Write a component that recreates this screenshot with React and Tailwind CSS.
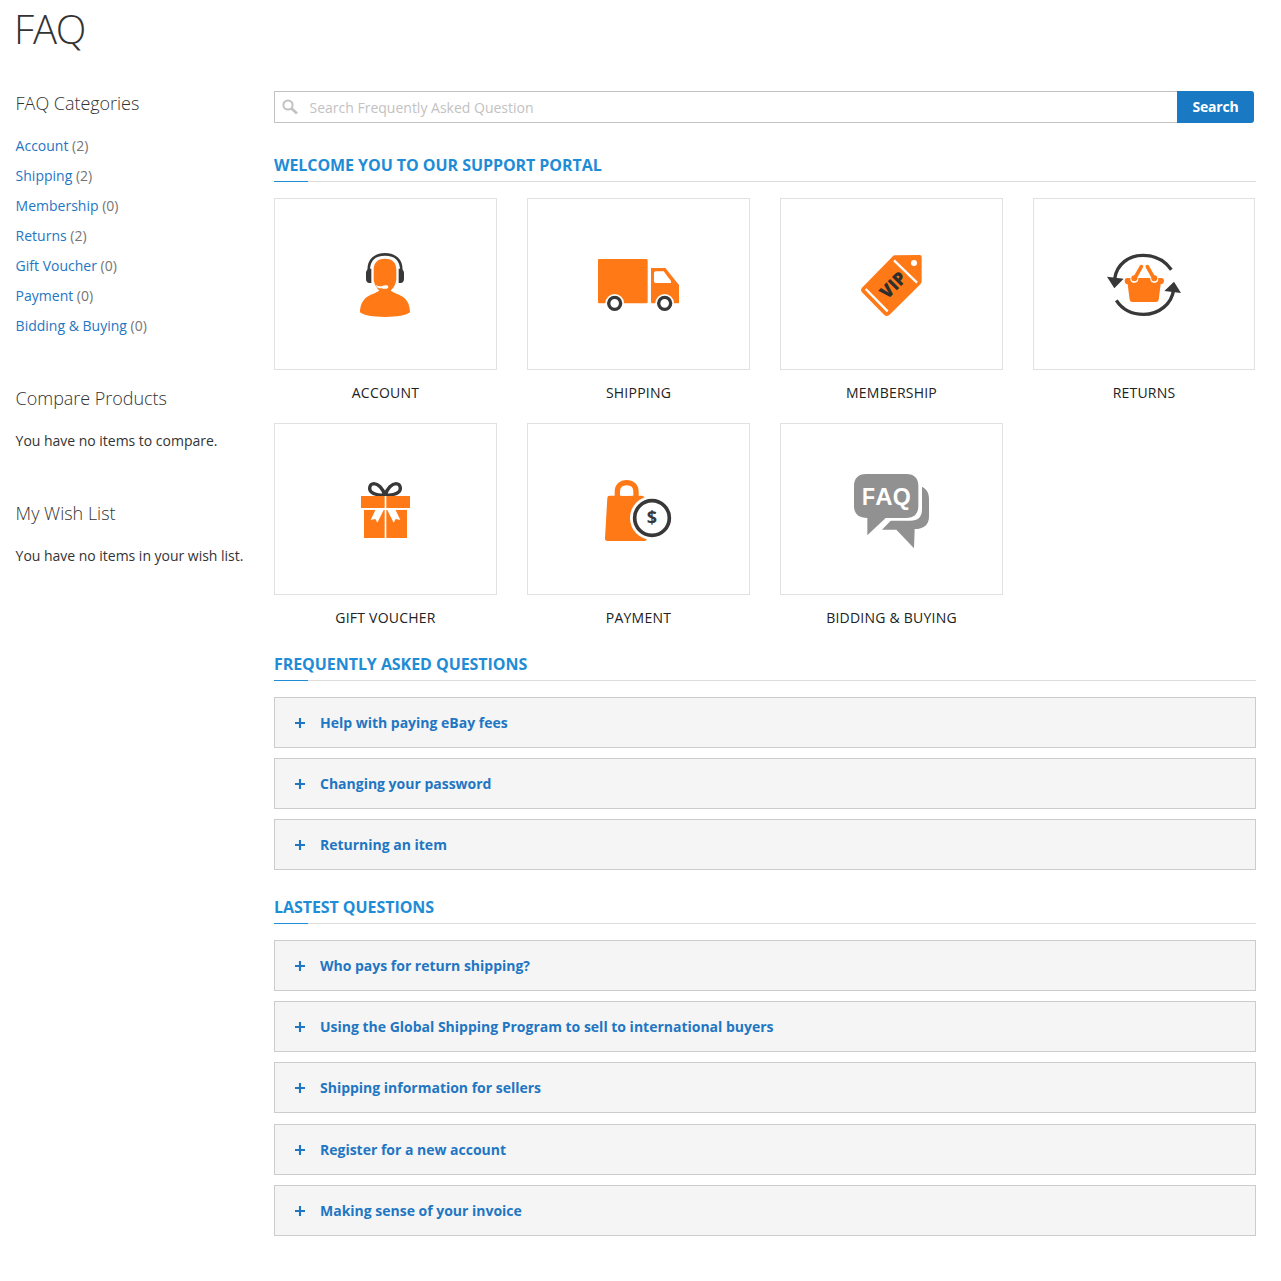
import React from "react";

const ORANGE = "#ff7917";
const DARK = "#383838";

const AccountIcon = () => (
  <g transform="translate(70 41) scale(.33333)">
    <path d="M71 91C71 59 91 43 120 43s49 16 49 48" fill="none" stroke={DARK} strokeWidth="8" />
    <path d="M79 86v43h-5c-8 0-11-6-11-13v-16c0-8 4-14 16-14zM161 86v43h5c8 0 11-6 11-13v-16c0-8-4-14-16-14z" fill={DARK} />
    <path d="M120 56c24 0 34 14 34 34v25c0 16-8 29-17 37 8 6 22 9 36 18 15 10 22 27 22 47-11 9-38 14-75 14s-64-5-75-14c0-20 7-37 22-47 14-9 28-12 36-18-9-8-17-21-17-37V90c0-20 10-34 34-34z" fill={ORANGE} />
    <path d="M92 135c6 3 13 5 20 3 6-3 17-3 18 2 1 7-13 8-20 5-9 1-15-3-18-10z" fill="#fff" />
    <path d="M84 129l13 16-8 2z" fill="#fff" />
  </g>
);

const ShippingIcon = () => (
  <g transform="translate(62 46) scale(.33333)">
    <path d="M27 42h142q4 0 4 4v125q0 4-4 4H27q-3 0-3-4V46q0-4 3-4zM183 69h43l41 51v55h-80q-4 0-4-4z" fill={ORANGE} />
    <path d="M197 79h24l22 29v6h-46q-5 0-5-5V84q0-5 5-5z" fill="#fff" />
    <circle cx="74" cy="175" r="28" fill="#fff" />
    <circle cx="224" cy="175" r="28" fill="#fff" />
    <circle cx="74" cy="175" r="18" fill="#fff" stroke={DARK} strokeWidth="10" />
    <circle cx="224" cy="175" r="18" fill="#fff" stroke={DARK} strokeWidth="10" />
  </g>
);

const MembershipIcon = () => (
  <g transform="translate(69 46) scale(.33333)">
    <path d="M135 31l74-1q6 0 6 6v73q0 5-4 9l-93 92q-8 6-15 0l-67-68q-6-7 0-14l91-93q4-4 8-4z" fill={ORANGE} />
    <path d="M132 46l69 67M47 132l66 67" stroke="#fff" strokeWidth="7" />
    <circle cx="192" cy="54" r="9" fill="#fff" />
    <text transform="translate(112 164) rotate(-45)" fill="#2e2e2e" fontFamily="Open Sans, sans-serif" fontSize="54" fontWeight="800" textLength="86" lengthAdjust="spacingAndGlyphs">VIP</text>
  </g>
);

const ReturnsIcon = () => (
  <g transform="translate(64 46) scale(.33333)" fill="none">
    <path d="M50 101C56 58 92 31 135 31c35 0 64 14 85 43" stroke={DARK} strokeWidth="10" />
    <path d="M55 166c17 26 45 42 82 42 46 0 84-31 90-74" stroke={DARK} strokeWidth="10" />
    <path d="M27 95l50 6-28 29zM228 110l21 34-50-6z" fill={DARK} />
    <path d="M87 99h103q8 0 8 9t-10 10l-6 46q-1 7-8 7h-71q-7 0-8-7l-6-46q-9-1-9-10t7-9z" fill={ORANGE} />
    <path d="M130 66l-22 37M148 66l22 37" stroke="#fff" strokeWidth="18" strokeLinecap="round" />
    <circle cx="109" cy="101" r="12" fill="#fff" />
    <circle cx="169" cy="101" r="12" fill="#fff" />
    <path d="M130 65l-21 37M148 65l21 37" stroke={ORANGE} strokeWidth="11" strokeLinecap="round" />
    <circle cx="109" cy="100" r="9" fill={ORANGE} />
    <circle cx="169" cy="100" r="9" fill={ORANGE} />
  </g>
);

const GiftIcon = () => (
  <g transform="translate(75 48) scale(.33333)">
    <path d="M105 70C98 48 84 35 72 35 57 36 56 53 64 60s19 10 41 10zM105 70c7-22 21-35 33-35 15 1 16 18 8 25s-19 10-41 10z" fill="none" stroke={DARK} strokeWidth="10" />
    <path d="M33 72h147v36H33zM42 113h129v85H42z" fill={ORANGE} />
    <path d="M104 72h5v126h-5zM42 108h129v5H42zM78 110h25l-21 42-6-11-14 3zM110 110h25l16 34-14-3-6 11z" fill="#fff" />
  </g>
);

const PaymentIcon = () => (
  <g transform="translate(67 46) scale(.33333)">
    <path d="M67 86V65c0-18 12-27 28-27s28 9 28 27v21" fill="none" stroke={ORANGE} strokeWidth="16" />
    <path d="M67 77h73q6 0 9 6l6 124q0 6-6 6H38q-9 0-8-8l7-121q0-7 7-7z" fill={ORANGE} />
    <path d="M81 77V63c0-8 5-14 14-14s14 6 14 14v14z" fill="#fff" />
    <circle cx="171" cy="144" r="66" fill="#fff" />
    <circle cx="171" cy="144" r="52" fill="#fff" stroke={DARK} strokeWidth="11" />
    <text x="171" y="163" fill={DARK} fontFamily="Open Sans, sans-serif" fontSize="54" fontWeight="700" textAnchor="middle">$</text>
  </g>
);

const FaqIcon = () => (
  <g transform="translate(64 41) scale(.33333)">
    <path d="M217 63c23 0 35 17 35 38v54c0 24-16 37-43 37l-2 58-53-56h-43l34-35z" fill="#919191" />
    <path d="M180 20h20q31 5 31 33v79c0 25-12 35-35 35h-66l-26 27-35 6z" fill="#fff" />
    <path d="M63 27h121c24 0 36 13 36 36v60c0 23-13 36-36 36h-62l-55 52v-52c-26 0-40-13-40-36V63c0-23 13-36 36-36z" fill="#919191" />
    <g fill="#fff" fontFamily="Liberation Sans, Arial, sans-serif" fontSize="71" fontWeight="700">
      <text x="51" y="119" textLength="39" lengthAdjust="spacingAndGlyphs">F</text>
      <text x="91" y="119" textLength="52" lengthAdjust="spacingAndGlyphs">A</text>
      <text x="143" y="119" textLength="54" lengthAdjust="spacingAndGlyphs">Q</text>
    </g>
  </g>
);

const categories = [
  ["Account", 2], ["Shipping", 2], ["Membership", 0], ["Returns", 2],
  ["Gift Voucher", 0], ["Payment", 0], ["Bidding & Buying", 0],
];

const tiles = [
  ["Account", AccountIcon], ["Shipping", ShippingIcon], ["Membership", MembershipIcon], ["Returns", ReturnsIcon],
  ["Gift Voucher", GiftIcon], ["Payment", PaymentIcon], ["Bidding & Buying", FaqIcon],
];

const faqs = ["Help with paying eBay fees", "Changing your password", "Returning an item"];
const latest = [
  "Who pays for return shipping?",
  "Using the Global Shipping Program to sell to international buyers",
  "Shipping information for sellers",
  "Register for a new account",
  "Making sense of your invoice",
];

function SectionTitle({ children }) {
  return (
    <h2 className="mb-4 flex h-[33px] flex-col justify-between border-b border-[#dddddd] text-base leading-[33px] font-bold tracking-[-0.06px] text-[#1f8cd6] uppercase">
      <span className="h-8 leading-8">{children}</span>
      <span className="h-px w-[34px] shrink-0 bg-[#1f8cd6]" />
    </h2>
  );
}

function Questions({ items }) {
  return (
    <ul>
      {items.map((q) => (
        <li key={q} className="mb-[10.2px] flex h-[51px] items-center border border-[#cccccc] bg-[#f5f5f5] pl-5 text-sm font-bold tracking-[-0.01px] text-[#1f76c2]">
          <svg width="10" height="11" viewBox="0 0 10 11" className="mr-[15px]">
            <path d="M5 1v10M0 6h10" stroke="currentColor" strokeWidth="2.1" />
          </svg>
          <a href="#" className="leading-[21px]">{q}</a>
        </li>
      ))}
    </ul>
  );
}

export default function App() {
  return (
    <div className="h-[1281px] w-[1281px] overflow-hidden bg-white pr-[25px] pl-[15px] font-['Open_Sans',sans-serif] text-sm text-[#333333]">
      <h1 className="-ml-px h-[91px] pt-[7px] text-[40px] leading-[44px] font-light tracking-[-1.2px]">FAQ</h1>
      <div className="flex">
        <aside className="w-[259px] shrink-0 pl-[0.6px]">
          <h3 className="h-[40px] text-lg leading-[25px] font-light tracking-[-0.03px]">FAQ Categories</h3>
          <ul className="h-[255px]">
            {categories.map(([name, n]) => (
              <li key={name} className="h-[30px] leading-[30px] text-[#757575]">
                <a href="#" className="text-[#1f76c2]">{name}</a> ({n})
              </li>
            ))}
          </ul>
          <h3 className="h-[40px] text-lg leading-[25px] font-light tracking-[-0.03px]">Compare Products</h3>
          <p className="h-[75px] leading-[30px] tracking-[-0.02px]">You have no items to compare.</p>
          <h3 className="h-[40px] text-lg leading-[25px] font-light">My Wish List</h3>
          <p className="leading-[30px] tracking-[-0.02px] whitespace-nowrap">You have no items in your wish list.</p>
        </aside>
        <main className="w-[982px]">
          <div className="mb-[26px] flex h-8 w-[980px]">
            <div className="flex flex-1 items-center rounded-l-[1px] border border-r-0 border-[#c2c2c2] pl-[7px]">
              <svg width="16" height="16" viewBox="0 0 16 16" fill="none" stroke="#c2c2c2">
                <circle cx="6" cy="6" r="4.6" strokeWidth="2" />
                <path d="M9.5 9.5l5.5 5" strokeWidth="2.7" />
              </svg>
              <input className="ml-[11.5px] flex-1 pt-[2px] outline-none placeholder:text-[#c2c2c2]" placeholder="Search Frequently Asked Question" />
            </div>
            <button className="w-[77px] rounded-r-[3px] bg-[#1979c3] font-bold tracking-[-0.2px] text-white">Search</button>
          </div>
          <SectionTitle>Welcome you to our support portal</SectionTitle>
          <div className="grid grid-cols-[223px_223px_223px_222px] gap-x-[30px]">
            {tiles.map(([name, Icon]) => (
              <div key={name} className="h-[225px]">
                <div className="h-[172px] border border-[#e1e1e1]">
                  <svg width="220" height="170" viewBox="0 0 220 170"><Icon /></svg>
                </div>
                <div className="pt-[13px] text-center leading-5 font-medium tracking-[0.22px] text-[#222222] uppercase">{name}</div>
              </div>
            ))}
          </div>
          <SectionTitle>Frequently asked questions</SectionTitle>
          <Questions items={faqs} />
          <div className="h-[10.5px]" />
          <SectionTitle>Lastest questions</SectionTitle>
          <Questions items={latest} />
        </main>
      </div>
    </div>
  );
}
